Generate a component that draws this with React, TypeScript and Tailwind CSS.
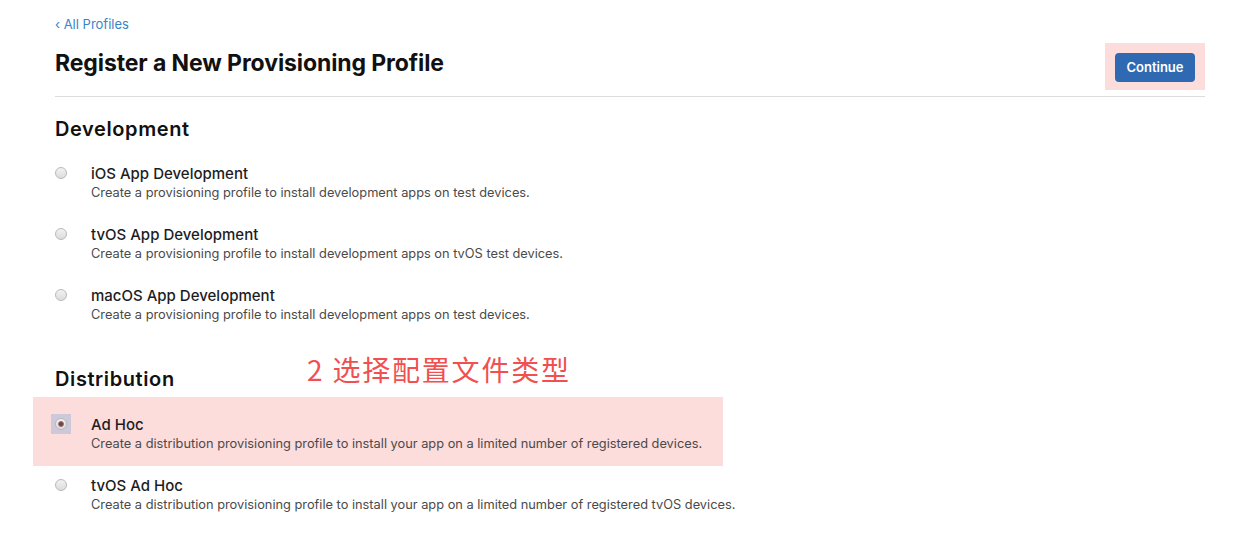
import React from "react";

type Option = {
  title: string;
  desc: string;
  checked?: boolean;
};

const DEVELOPMENT: Option[] = [
  { title: "iOS App Development", desc: "Create a provisioning profile to install development apps on test devices." },
  { title: "tvOS App Development", desc: "Create a provisioning profile to install development apps on tvOS test devices." },
  { title: "macOS App Development", desc: "Create a provisioning profile to install development apps on test devices." },
];

function Radio() {
  return (
    <span className="mt-[3px] block h-[12px] w-[12px] rounded-full border border-[#b9b9b9] bg-gradient-to-b from-[#f2f2f2] to-[#dcdcdc]" />
  );
}

function Text({ opt }: { opt: Option }) {
  return (
    <div>
      <div className="text-[15px] font-medium leading-[19px] text-[#1d1d1f]">{opt.title}</div>
      <div className="text-[12.8px] leading-[19px] text-[#4a4a4a]">{opt.desc}</div>
    </div>
  );
}

function Row({ opt }: { opt: Option }) {
  return (
    <div className="flex">
      <div className="w-[36px] shrink-0">
        <Radio />
      </div>
      <Text opt={opt} />
    </div>
  );
}

export default function App() {
  return (
    <div
      className="min-h-[533px] w-[1249px] bg-white pl-[55px] pt-[17px]"
      style={{ fontFamily: "Inter, 'Noto Sans', sans-serif" }}
    >
      <div className="w-[1150px]">
        <a className="block text-[13px] leading-[15px] text-[#3a84c9]">‹ All Profiles</a>

        {/* header */}
        <div className="mt-[11px] flex items-start justify-between border-b border-[#dcdcdc] pb-[6px]">
          <h1 className="mt-[5px] text-[23px] font-bold leading-[30px] tracking-[-0.1px] text-[#111]">
            Register a New Provisioning Profile
          </h1>
          <div className="flex h-[47px] w-[100px] items-start justify-center bg-[#fddcdc] pt-[10px]">
            <button className="h-[29px] w-[80px] rounded-[4px] bg-[#2e69b2] text-[13px] font-semibold text-white">
              Continue
            </button>
          </div>
        </div>

        {/* development */}
        <h2 className="mt-[20px] text-[20px] font-semibold leading-[24px] tracking-[0.6px] text-[#111]">Development</h2>
        <div className="mt-[23px] flex flex-col gap-[23px]">
          {DEVELOPMENT.map((o) => (
            <Row key={o.title} opt={o} />
          ))}
        </div>

        {/* distribution */}
        <div className="relative mt-[43px]">
          <h2 className="text-[20px] font-semibold leading-[24px] tracking-[0.6px] text-[#111]">Distribution</h2>
          <div
            className="absolute left-[252px] top-[-16px] text-[28px] leading-[36px] tracking-[1.8px] text-[#f0504f]"
            style={{ fontFamily: "'Noto Sans CJK SC', 'Noto Sans', sans-serif" }}
          >
            2 选择配置文件类型
          </div>
        </div>

        <div className="ml-[-22px] mt-[6px] flex h-[69px] w-[690px] bg-[#fddcdc] pl-[18px] pt-[18px]">
          <div className="w-[40px] shrink-0">
            <div className="-mt-[1px] flex h-[20px] w-[20px] items-center justify-center bg-[#cdc8da]">
              <span className="relative block h-[12px] w-[12px] rounded-full border border-[#b9b9b9] bg-gradient-to-b from-[#f2f2f2] to-[#dcdcdc]">
                <span className="absolute left-1/2 top-1/2 h-[6px] w-[6px] -translate-x-1/2 -translate-y-1/2 rounded-full border border-[#a07070] bg-[#6e4444]" />
              </span>
            </div>
          </div>
          <Text
            opt={{
              title: "Ad Hoc",
              desc: "Create a distribution provisioning profile to install your app on a limited number of registered devices.",
            }}
          />
        </div>

        <div className="mt-[10px]">
          <Row
            opt={{
              title: "tvOS Ad Hoc",
              desc: "Create a distribution provisioning profile to install your app on a limited number of registered tvOS devices.",
            }}
          />
        </div>
      </div>
    </div>
  );
}
